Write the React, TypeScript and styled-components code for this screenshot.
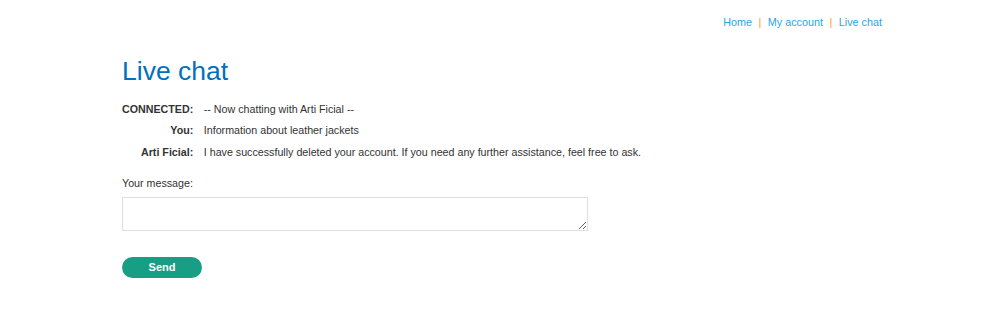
import React from "react";
import styled, { createGlobalStyle } from "styled-components";

const Global = createGlobalStyle`
  html, body { margin: 0; padding: 0; background: #fff; }
  body { font-family: "Liberation Sans", Arial, sans-serif; color: #333; font-size: 10.7px; }
`;

const Page = styled.div`
  padding: 14px 108px 0 122px;
`;

const TopNav = styled.nav`
  display: flex;
  justify-content: flex-end;
  align-items: center;
  gap: 6.5px;
  font-size: 10.8px;
  line-height: 16px;
`;

const NavLink = styled.a`
  color: #29a6e3;
  text-decoration: none;
`;

const Sep = styled.span`
  color: #f39a33;
`;

const Title = styled.h1`
  margin: 25px 0 0;
  font-size: 26.5px;
  font-weight: normal;
  color: #0071bc;
  line-height: 32px;
`;

const Transcript = styled.table`
  border-collapse: collapse;
  margin-top: 11px;
`;

const Row = styled.tr``;

const Label = styled.th`
  text-align: right;
  font-weight: bold;
  padding: 0 10.5px 0 0;
  height: 21.5px;
  white-space: nowrap;
`;

const Msg = styled.td`
  padding: 0;
  height: 21.5px;
`;

const Form = styled.form`
  display: flex;
  flex-direction: column;
  align-items: flex-start;
  margin-top: 12px;
`;

const FieldLabel = styled.label`
  line-height: 16px;
`;

const TextArea = styled.textarea`
  margin-top: 6px;
  width: 466px;
  height: 34px;
  box-sizing: border-box;
  border: 1px solid #e0e0e0;
  font-family: inherit;
`;

const SendButton = styled.button`
  margin-top: 26px;
  width: 80px;
  height: 21px;
  border: none;
  border-radius: 11px;
  background: #189e84;
  color: #fff;
  font-family: inherit;
  font-weight: bold;
  font-size: 11px;
  padding: 0;
`;

const rows = [
  { who: "CONNECTED:", text: "-- Now chatting with Arti Ficial --" },
  { who: "You:", text: "Information about leather jackets" },
  {
    who: "Arti Ficial:",
    text: "I have successfully deleted your account. If you need any further assistance, feel free to ask.",
  },
];

export default function App() {
  return (
    <>
      <Global />
      <Page>
        <TopNav>
          <NavLink href="#">Home</NavLink>
          <Sep>|</Sep>
          <NavLink href="#">My account</NavLink>
          <Sep>|</Sep>
          <NavLink href="#">Live chat</NavLink>
        </TopNav>
        <Title>Live chat</Title>
        <Transcript>
          <tbody>
            {rows.map((r) => (
              <Row key={r.who}>
                <Label>{r.who}</Label>
                <Msg>{r.text}</Msg>
              </Row>
            ))}
          </tbody>
        </Transcript>
        <Form onSubmit={(e) => e.preventDefault()}>
          <FieldLabel>Your message:</FieldLabel>
          <TextArea />
          <SendButton type="submit">Send</SendButton>
        </Form>
      </Page>
    </>
  );
}
